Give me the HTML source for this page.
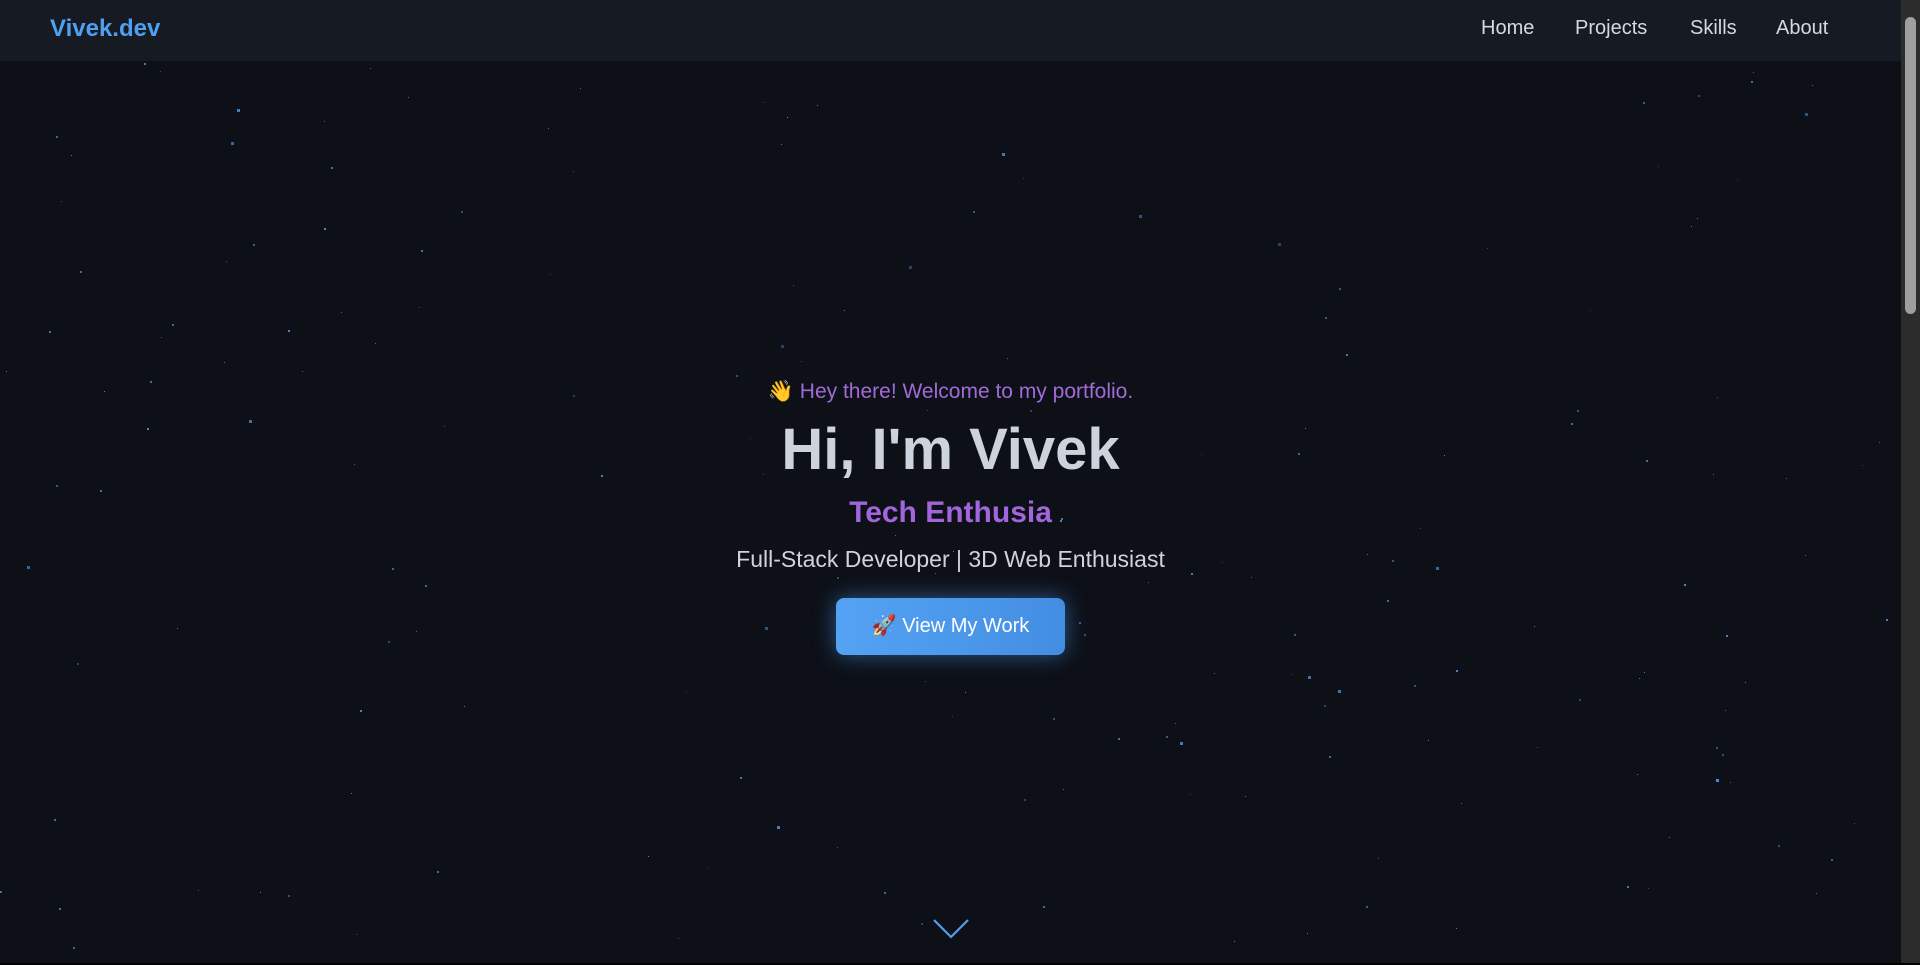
<!DOCTYPE html>
<html><head><meta charset="utf-8"><style>
*{margin:0;padding:0;box-sizing:border-box}
html,body{width:1920px;height:965px;overflow:hidden;background:#0d1017;font-family:"Liberation Sans",sans-serif}
.nav{position:absolute;left:0;top:0;width:1901px;height:61px;background:#161a22}
.logo{position:absolute;left:50px;top:15px;font-size:24px;font-weight:bold;color:#4fa0f0}
.links{position:absolute;top:17px;font-size:20px;color:#d6d9de}
.links span{position:absolute;white-space:nowrap}
.sb{position:absolute;left:1901px;top:0;width:19px;height:963px;background:#2c2c2c}
.th{position:absolute;left:1905px;top:17px;width:11px;height:297px;background:#9f9f9f;border-radius:6px}
.c{position:absolute;left:0;width:1901px;text-align:center;white-space:nowrap}
.btn{position:absolute;left:836px;top:598px;width:229px;height:57px;border-radius:8px;background:linear-gradient(90deg,#55a2f4,#438ee2);box-shadow:0 0 22px rgba(70,150,240,.55);color:#fff;font-size:20px;line-height:57px;text-align:center}
.star{position:absolute;background:#4f9ff0}
</style></head><body>
<div id="stars"></div>
<div class="nav"><div class="logo">Vivek.dev</div>
<div class="links"><span style="left:1481px">Home</span><span style="left:1575px">Projects</span><span style="left:1690px">Skills</span><span style="left:1776px">About</span></div></div>
<div class="c" style="top:380px;font-size:21px;color:#a26ad6">👋 Hey there! Welcome to my portfolio.</div>
<div class="c" style="top:416px;font-size:58px;font-weight:bold;color:#cdd3dc">Hi, I'm Vivek</div>
<div class="c" style="top:496px;font-size:30px;font-weight:bold;color:#a265dc">Tech Enthusia</div>
<div class="c" style="top:546px;font-size:23px;color:#d0d4da">Full-Stack Developer | 3D Web Enthusiast</div>
<div class="btn">🚀 View My Work</div>
<svg style="position:absolute;left:930px;top:916px" width="42" height="26"><path d="M4 4 L21 21 L38 4" stroke="#4f9ff0" stroke-width="2.2" fill="none"/></svg>
<div style="position:absolute;left:0;top:963px;width:1920px;height:2px;background:#000"></div>
<div class="sb"></div><div class="th"></div>
<script>
var s=document.getElementById('stars'),seed=7;function r(){seed=(seed*16807)%2147483647;return seed/2147483647}
var h='';for(var i=0;i<190;i++){var x=r()*1890,y=62+r()*900,z=r()<0.08?3:(r()<0.4?2:1);h+='<div class="star" style="left:'+x+'px;top:'+y+'px;width:'+z+'px;height:'+z+'px;opacity:'+(0.35+r()*0.5)+'"></div>'}
s.innerHTML=h;
</script>
</body></html>
